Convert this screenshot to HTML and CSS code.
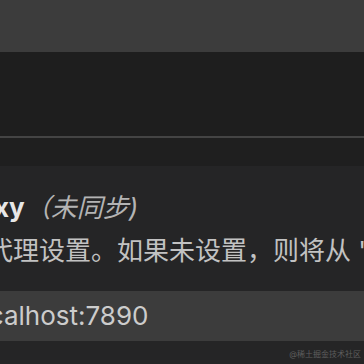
FILE: index.html
```html
<!DOCTYPE html>
<html lang="zh-CN">
<head>
<meta charset="utf-8">
<link rel="stylesheet" href="styles.css">
</head>
<body>
<div class="topbar"></div>
<div class="editor-area"></div>
<div class="divider"></div>
<div class="band"></div>
<div class="settings">
  <div class="content">
    <div class="title"><span class="category">Http: </span><span class="label">Proxy</span><span class="sync">（未同步)</span></div>
    <div class="desc">要使用的代理设置。如果未设置，则将从 "http_proxy" 和 "https_proxy" 环境变量中获取。</div>
    <div class="input">http://localhost:7890</div>
  </div>
  <div class="watermark">@稀土掘金技术社区</div>
</div>
</body>
</html>
```
FILE: styles.css
```css
html, body {
  margin: 0;
  padding: 0;
  width: 364px;
  height: 364px;
  overflow: hidden;
  background: #252526;
  font-family: Inter, "Noto Sans CJK SC", sans-serif;
}
.topbar {
  height: 52px;
  background: #3c3c3c;
}
.editor-area {
  height: 84px;
  background: #1e1e1e;
}
.divider {
  height: 2px;
  background: #444444;
}
.band {
  height: 28px;
  background: #1f1f1f;
}
.settings {
  position: relative;
  height: 198px;
  background: #252526;
}
.content {
  margin-left: -117px;
  padding-top: 24px;
  white-space: nowrap;
  font-size: 26px;
}
.title {
  margin-left: 2px;
  line-height: 36px;
  color: #e7e7e7;
}
.category {
  font-weight: 400;
}
.label {
  font-weight: 700;
}
.sync {
  font-style: italic;
  color: #b4b4b4;
}
.desc {
  margin-top: 7px;
  line-height: 36px;
  color: #c2c2c2;
}
.input {
  margin-top: 22px;
  height: 50px;
  line-height: 50px;
  width: 600px;
  padding-left: 10px;
  background: #3c3c3c;
  color: #cccccc;
}
.watermark {
  position: absolute;
  right: 3px;
  bottom: 5px;
  font-size: 8px;
  line-height: 10px;
  color: #5e5e5e;
}
```
